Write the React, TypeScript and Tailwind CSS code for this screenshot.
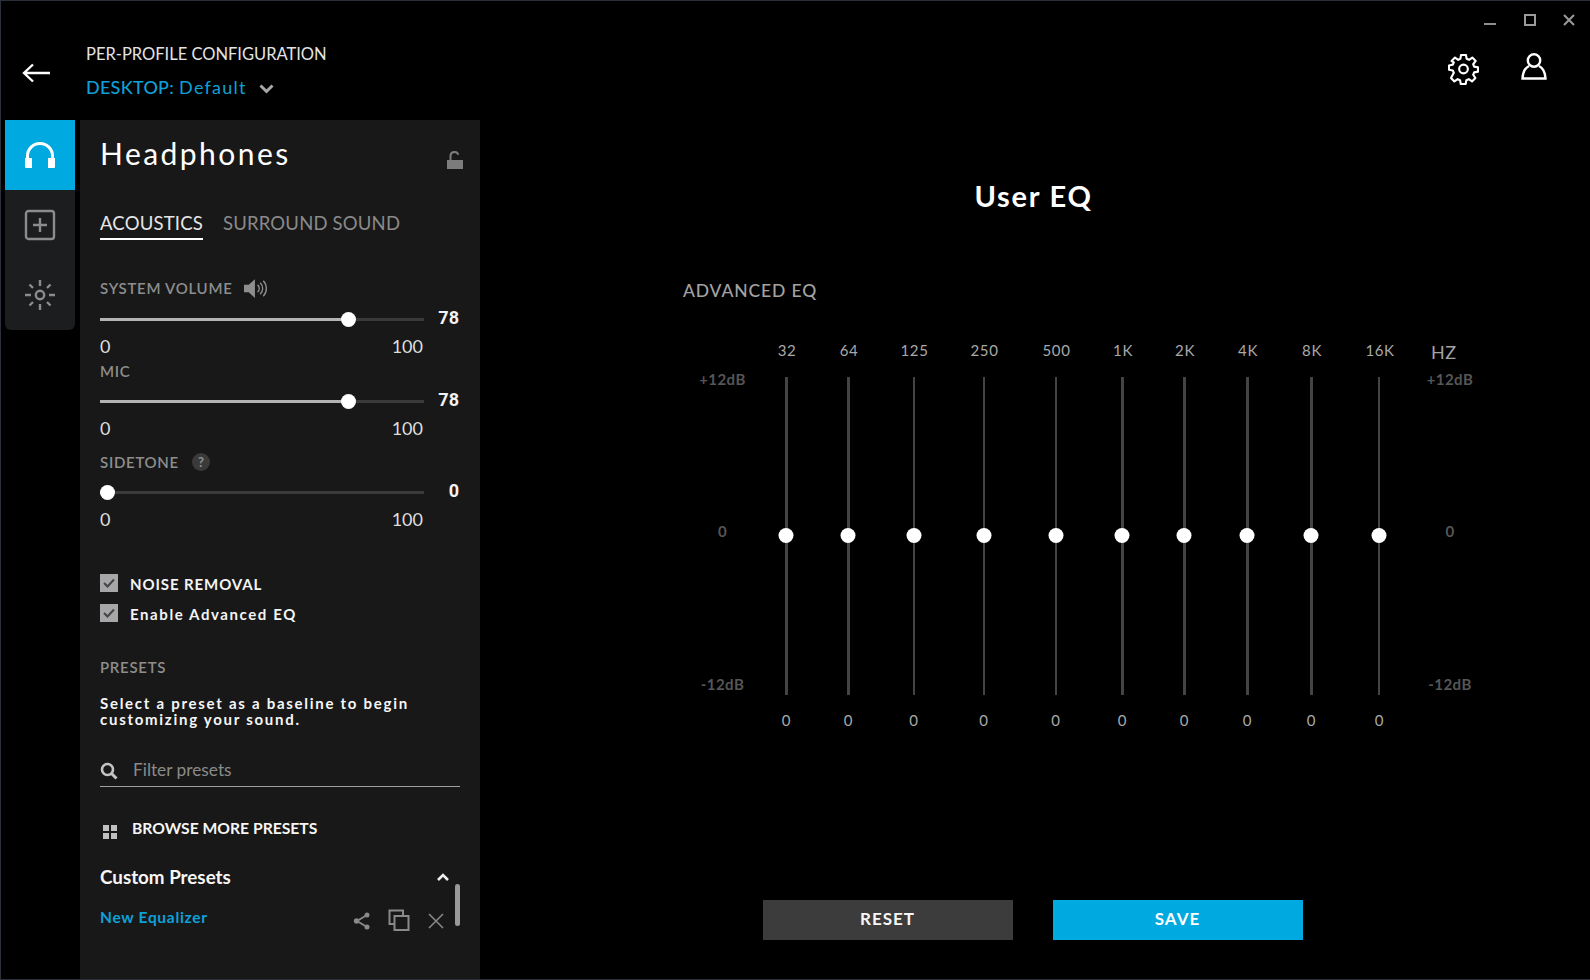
import type { ReactNode } from 'react'

const eqBands = [
  { label: '32', col: 'w-[62px]', track: 'w-[3px]' },
  { label: '64', col: 'w-[62px]', track: 'w-[3px]' },
  { label: '125', col: 'w-[69px]', track: 'w-[2px]' },
  { label: '250', col: 'w-[71px]', track: 'w-[2px]' },
  { label: '500', col: 'w-[73px]', track: 'w-[2px]' },
  { label: '1K', col: 'w-[60px]', track: 'w-[3px]' },
  { label: '2K', col: 'w-[64px]', track: 'w-[3px]' },
  { label: '4K', col: 'w-[62px]', track: 'w-[3px]' },
  { label: '8K', col: 'w-[66px]', track: 'w-[3px]' },
  { label: '16K', col: 'w-[70px]', track: 'w-[2px]' },
]

function SectionLabel({ children, className }: { children: ReactNode; className: string }) {
  return (
    <div className={`flex h-[22px] items-center text-[15px] font-semibold leading-[22px] tracking-[0.047em] text-[#8e8e8e] ${className}`}>
      {children}
    </div>
  )
}

function VolumeSlider({ value, className }: { value: number; className: string }) {
  const thumbLeft = (value / 100) * 309
  return (
    <div className={`flex h-[20px] items-center ${className}`}>
      <div className="relative h-[3px] w-[324px] bg-[#3a3a3a]">
        <div className="h-full bg-[#b4b4b4]" style={{ width: thumbLeft + 7 }} />
        <div
          className="absolute top-[-6px] h-[15px] w-[15px] rounded-full bg-white"
          style={{ left: thumbLeft }}
        />
      </div>
      <div className="mb-[2px] w-[35px] text-right font-['Roboto',sans-serif] text-[18px] font-bold leading-[20px] text-[#f2f2f2]">
        {value}
      </div>
    </div>
  )
}

function RangeEnds() {
  return (
    <div className="mt-[6px] flex h-[22px] w-[323px] justify-between text-[18px] leading-[22px] text-[#dedede]">
      <span>0</span>
      <span>100</span>
    </div>
  )
}

function CheckRow({ label, className, textClass }: { label: string; className: string; textClass: string }) {
  return (
    <div className={`flex h-[18px] items-center gap-[12px] ${className}`}>
      <div className="flex h-[18px] w-[18px] items-center justify-center bg-[#a7a7aa]">
        <svg width="12" height="10" viewBox="0 0 12 10" fill="none" stroke="#444" strokeWidth="2">
          <path d="M1 5l3.5 3.5L11 1.5" />
        </svg>
      </div>
      <span className={`mt-[2px] text-[15px] font-bold text-[#f4f4f4] ${textClass}`}>{label}</span>
    </div>
  )
}

function EqBand({ label, col, track }: { label: string; col: string; track: string }) {
  return (
    <div className={`flex flex-col items-center ${col}`}>
      <div className="ml-[2px] h-[38px] text-[15px] leading-[22px] tracking-[0.04em] text-[#a9a9a9]">{label}</div>
      <div className={`relative h-[318px] bg-[#444444] ${track}`}>
        <div className="absolute left-1/2 top-[151px] h-[15px] w-[15px] -translate-x-1/2 rounded-full bg-white" />
      </div>
      <div className="mt-[14px] text-[15px] leading-[22px] text-[#a9a9a9]">0</div>
    </div>
  )
}

function DbScale() {
  return (
    <div className="mt-[29px] flex h-[327px] flex-col justify-between text-center text-[15px] font-bold leading-[22px] tracking-[0.03em] text-[#565656]">
      <span>+12dB</span>
      <span className="-translate-y-[1px]">0</span>
      <span>-12dB</span>
    </div>
  )
}

export default function App() {
  return (
    <div className="flex h-[980px] w-[1590px] flex-col overflow-hidden border-b border-l border-t border-[#2b303a] bg-black font-['Lato',sans-serif] text-white">
      <header className="flex h-[119px] shrink-0">
        <div className="w-[85px] pl-[21px] pt-[62px]">
          <svg width="29" height="20" viewBox="0 0 29 20" fill="none" stroke="#fff" strokeWidth="2.4">
            <path d="M28 10H2M11 1.5L2 10l9 8.5" />
          </svg>
        </div>
        <div className="pt-[41px]">
          <div className="h-[24px] text-[16.5px] leading-[24px] text-[#e4e4e4]">PER-PROFILE CONFIGURATION</div>
          <div className="mt-[9px] flex h-[24px] items-center text-[18px] leading-[24px] tracking-[0.015em] text-[#0ea0d8]">
            <span className="font-medium">DESKTOP:</span>
            <span className="ml-[5px] tracking-[0.07em]">Default</span>
            <svg className="ml-[12px] mt-[3px]" width="15" height="10" viewBox="0 0 15 10" fill="none" stroke="#a8a8a8" strokeWidth="3">
              <path d="M1.5 1.5l6 6 6-6" />
            </svg>
          </div>
        </div>
        <div className="flex-1" />
        <div className="flex w-[160px] flex-col items-end">
          <div className="flex pr-[15px] pt-[13px]">
            <div className="mr-[28px] mt-[8px] h-[2px] w-[12px] translate-y-[1px] bg-[#8f8f8f]" />
            <div className="mr-[27px] h-[12px] w-[12px] border-2 border-[#9a9a9a]" />
            <svg width="12" height="12" viewBox="0 0 12 12" fill="none" stroke="#9a9a9a" strokeWidth="2">
              <path d="M1 1l10 10M11 1L1 11" />
            </svg>
          </div>
          <div className="mt-[27px] flex items-start pr-[43px]">
            <svg className="mr-[42px] mt-[1px]" width="31" height="31" viewBox="0 0 32 32" fill="none" stroke="#fff" strokeWidth="2.2" strokeLinejoin="round">
              <path d="M13.5 2h5l.8 4 2.4 1 3.4-2.3 3.5 3.5L26 11.600l1 2.400 4 .8v4.400l-4 .8-1 2.400 2.300 3.400-3.500 3.500-3.400-2.300-2.400 1-.8 4h-5l-.8-4-2.400-1-3.400 2.300-3.500-3.500L6 20.400l-1-2.400-4-.8v-4.400l4-.8 1-2.400L3.700 8.200l3.500-3.500 3.400 2.300 2.100-1z" transform="translate(0 -1)" />
              <circle cx="16" cy="15.500" r="4.500" />
            </svg>
            <svg width="26" height="27" viewBox="0 0 26 27" fill="none" stroke="#fff" strokeWidth="2.400">
              <circle cx="13" cy="7.500" r="6.200" />
              <path d="M8 13C4 15 1.800 20 1.500 25.500h23C24.200 20 22 15 18 13" />
            </svg>
          </div>
        </div>
      </header>

      <div className="flex flex-1">
        <nav className="ml-[4px] h-[210px] w-[70px] shrink-0 overflow-hidden rounded-b-md bg-[#1c1d1f]">
          <div className="flex h-[70px] items-center justify-center bg-[#00a9e0]">
            <svg width="32" height="28" viewBox="0 0 32 28" fill="none">
              <path d="M3.500 19V15a12.500 12.500 0 0 1 25 0v4" stroke="#fff" strokeWidth="3" />
              <path d="M1 17h7v10H2a1 1 0 0 1-1-1zM24 17h7v9a1 1 0 0 1-1 1h-6z" fill="#fff" />
            </svg>
          </div>
          <div className="flex h-[70px] items-center justify-center">
            <svg width="32" height="32" viewBox="0 0 32 32" fill="none" stroke="#8c8c8c" strokeWidth="2.400">
              <rect x="2" y="2" width="28" height="28" rx="2.500" />
              <path d="M16 9v14M9 16h14" />
            </svg>
          </div>
          <div className="flex h-[70px] items-center justify-center">
            <svg width="32" height="32" viewBox="0 0 32 32" fill="none" stroke="#8c8c8c" strokeWidth="2.400">
              <circle cx="16" cy="16" r="4.200" />
              <path d="M16 1v6M16 25v6M1 16h6M25 16h6M5.500 5.500l3.500 3.500M23 23l3.500 3.500M5.500 26.500L9 23M23 9l3.500-3.500" />
            </svg>
          </div>
        </nav>

        <aside className="relative ml-[5px] w-[400px] shrink-0 bg-[#181818] pl-[20px]">
          <div className="flex h-[66px] items-center justify-between pr-[17px]">
            <h1 className="text-[30px] font-normal tracking-[0.082em]">Headphones</h1>
            <svg className="mt-[14px]" width="16" height="18" viewBox="0 0 16 18" fill="#7c7c7c">
              <path d="M0 9h16v9H0z" />
              <path d="M3.500 9V5a4 4 0 0 1 7.800-1.200" fill="none" stroke="#7c7c7c" strokeWidth="2" />
            </svg>
          </div>

          <div className="mt-[22px] flex gap-[20px] text-[18.500px] tracking-[0.01em]">
            <div className="h-[32px] border-b-2 border-white leading-[31px] text-[#e6e6e6]">ACOUSTICS</div>
            <div className="h-[32px] leading-[31px] text-[#8a8a8a]">SURROUND SOUND</div>
          </div>

          <SectionLabel className="mt-[37px] gap-[11px]">
            SYSTEM VOLUME
            <svg width="25" height="21" viewBox="0 0 24 20" fill="none">
              <path d="M0 6.500h4.500L10.500 1v18l-6-5.500H0z" fill="#8e8e8e" />
              <path d="M13 6.500a4.500 4.500 0 0 1 0 7M15.500 4.500a7.500 7.500 0 0 1 0 11M18.500 2.500a11 11 0 0 1 0 15" stroke="#8e8e8e" strokeWidth="1.300" />
            </svg>
          </SectionLabel>
          <VolumeSlider value={78} className="mt-[10px]" />
          <RangeEnds />

          <SectionLabel className="mt-[3px]">MIC</SectionLabel>
          <VolumeSlider value={78} className="mt-[9px]" />
          <RangeEnds />

          <SectionLabel className="mt-[12px] gap-[13px]">
            SIDETONE
            <span className="flex h-[18px] w-[18px] items-center justify-center rounded-full bg-[#3a3a3a] text-[13px] font-bold tracking-normal text-[#909090]">?</span>
          </SectionLabel>
          <VolumeSlider value={0} className="mt-[9px]" />
          <RangeEnds />

          <CheckRow label="NOISE REMOVAL" className="mt-[44px]" textClass="tracking-[0.06em]" />
          <CheckRow label="Enable Advanced EQ" className="mt-[12px]" textClass="tracking-[0.106em]" />

          <SectionLabel className="mt-[34px]">PRESETS</SectionLabel>
          <p className="mt-[17px] w-[340px] text-[15px] font-bold leading-[16px] tracking-[0.115em] text-[#f6f6f6]">
            Select a preset as a baseline to begin customizing your sound.
          </p>

          <div className="mt-[28px] flex h-[32px] w-[360px] items-center border-b border-[#a0a0a0] pb-[3px]">
            <svg className="mt-[3px]" width="18" height="18" viewBox="0 0 18 18" fill="none" stroke="#c4c4c4">
              <circle cx="7.500" cy="7.500" r="5.500" strokeWidth="2.600" />
              <path d="M11.500 11.500l5 5" strokeWidth="3" />
            </svg>
            <input
              className="ml-[15px] mt-[2px] flex-1 bg-transparent text-[17.300px] outline-none placeholder:text-[#8a8a8a]"
              placeholder="Filter presets"
              readOnly
            />
          </div>

          <div className="mt-[31px] flex h-[22px] items-center">
            <div className="ml-[3px] mt-[5px] grid grid-cols-[6px_6px] gap-[2px]">
              <div className="h-[6px] bg-[#c0c0c0]" />
              <div className="h-[6px] bg-[#c0c0c0]" />
              <div className="h-[6px] bg-[#c0c0c0]" />
              <div className="h-[6px] bg-[#c0c0c0]" />
            </div>
            <span className="ml-[15px] text-[15.700px] font-bold text-[#f6f6f6]">BROWSE MORE PRESETS</span>
          </div>

          <div className="mt-[26px] flex h-[22px] w-[349px] items-center justify-between">
            <span className="text-[18.800px] font-bold text-[#f6f6f6]">Custom Presets</span>
            <svg width="12" height="9" viewBox="0 0 12 9" fill="none" stroke="#eee" strokeWidth="2.600">
              <path d="M1 7l5-5 5 5" />
            </svg>
          </div>

          <div className="mt-[19px] flex h-[22px] items-center">
            <span className="w-[253px] text-[15.500px] font-bold tracking-[0.045em] text-[#0ea0d8]">New Equalizer</span>
            <svg className="mt-[5px]" width="18" height="18" viewBox="0 0 18 18" fill="#8a8a8a" stroke="#8a8a8a" strokeWidth="1.800">
              <path d="M14 3L4 9l10 6" fill="none" />
              <circle cx="14" cy="3" r="1.600" />
              <circle cx="3.500" cy="9" r="1.800" />
              <circle cx="14" cy="15" r="1.600" />
            </svg>
            <svg className="ml-[17px] mt-[4px]" width="22" height="22" viewBox="0 0 22 22" fill="none" stroke="#8a8a8a" strokeWidth="2">
              <path d="M6 15H1.500V1.500H15V6" />
              <rect x="6.500" y="7" width="14" height="14" />
            </svg>
            <svg className="ml-[18px] mt-[5px]" width="16" height="16" viewBox="0 0 16 16" fill="none" stroke="#8a8a8a" strokeWidth="1.500">
              <path d="M1 1l14 14M15 1L1 15" />
            </svg>
          </div>

          <div className="absolute left-[375px] top-[764px] h-[42px] w-[5px] rounded-full bg-[#9a9a9a]" />
        </aside>

        <main className="min-w-0 flex-1 pr-[3px]">
          <h2 className="mt-[56px] h-[40px] text-center text-[29px] font-bold leading-[40px] tracking-[0.06em]">User EQ</h2>
          <div className="ml-[203px] mt-[62px] h-[26px] text-[17.500px] font-medium leading-[26px] tracking-[0.05em] text-[#a3a3a3]">ADVANCED EQ</div>
          <div className="ml-[210px] mt-[35px] flex">
            <div className="w-[65px]">
              <DbScale />
            </div>
            {eqBands.map((band) => (
              <EqBand key={band.label} {...band} />
            ))}
            <div className="w-[72px]">
              <div className="absolute ml-[17px] mt-[2px] text-[18px] leading-[22px] tracking-[0.03em] text-[#a3a3a3]">HZ</div>
              <DbScale />
            </div>
          </div>
          <div className="mr-[2px] mt-[169px] flex justify-center gap-[40px]">
            <button className="h-[40px] w-[250px] bg-[#3c3c3c] pb-[2px] text-[17px] font-bold tracking-[0.06em] text-[#f6f6f6]">RESET</button>
            <button className="h-[40px] w-[250px] bg-[#00a9e0] pb-[2px] text-[17px] font-bold tracking-[0.06em] text-white">SAVE</button>
          </div>
        </main>
      </div>
    </div>
  )
}
